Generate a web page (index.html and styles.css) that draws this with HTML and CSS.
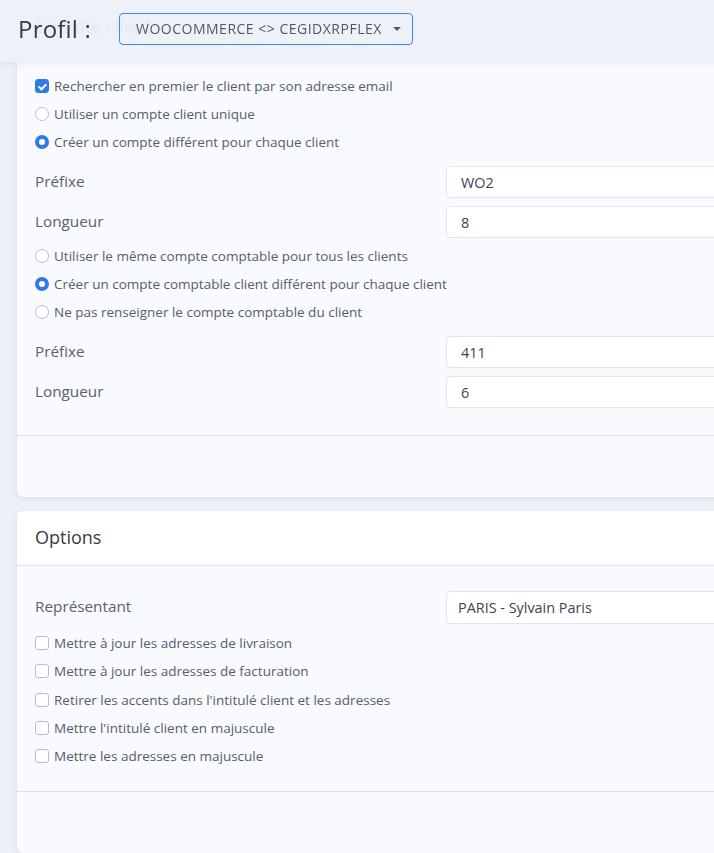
FILE: index.html
```html
<!DOCTYPE html>
<html lang="fr">
<head>
<meta charset="utf-8">
<title>Profil</title>
<link rel="stylesheet" href="styles.css">
</head>
<body>
<header class="topbar">
  <h1 class="topbar-title">Profil :</h1>
  <button class="profile-select" type="button">
    <span>WOOCOMMERCE &lt;&gt; CEGIDXRPFLEX</span>
    <span class="caret"></span>
  </button>
</header>

<main class="content">
  <section class="card">
    <div class="card-header"><h2>Compte client</h2></div>
    <div class="card-body card-body-client">
      <label class="check"><span class="box box-checked"></span>Rechercher en premier le client par son adresse email</label>
      <label class="check"><span class="radio"></span>Utiliser un compte client unique</label>
      <label class="check"><span class="radio radio-checked"></span>Créer un compte différent pour chaque client</label>

      <div class="fields">
        <div class="field"><span class="field-label">Préfixe</span><span class="input">WO2</span></div>
        <div class="field"><span class="field-label">Longueur</span><span class="input">8</span></div>
      </div>

      <label class="check"><span class="radio"></span>Utiliser le même compte comptable pour tous les clients</label>
      <label class="check"><span class="radio radio-checked"></span>Créer un compte comptable client différent pour chaque client</label>
      <label class="check"><span class="radio"></span>Ne pas renseigner le compte comptable du client</label>

      <div class="fields">
        <div class="field"><span class="field-label">Préfixe</span><span class="input">411</span></div>
        <div class="field"><span class="field-label">Longueur</span><span class="input">6</span></div>
      </div>
    </div>
    <div class="card-footer"></div>
  </section>

  <section class="card">
    <div class="card-header"><h2>Options</h2></div>
    <div class="card-body card-body-options">
      <div class="field field-tall"><span class="field-label">Représentant</span><span class="input">PARIS - Sylvain Paris</span></div>
      <div class="checks">
        <label class="check"><span class="box"></span>Mettre à jour les adresses de livraison</label>
        <label class="check"><span class="box"></span>Mettre à jour les adresses de facturation</label>
        <label class="check"><span class="box"></span>Retirer les accents dans l'intitulé client et les adresses</label>
        <label class="check"><span class="box"></span>Mettre l'intitulé client en majuscule</label>
        <label class="check"><span class="box"></span>Mettre les adresses en majuscule</label>
      </div>
    </div>
    <div class="card-footer"></div>
  </section>
</main>
</body>
</html>
```

FILE: styles.css
```css
* { box-sizing: border-box; }

html, body {
  margin: 0;
  padding: 0;
  overflow: hidden;
}

body {
  background: #edf1f7;
  font-family: "Open Sans", "Noto Sans", sans-serif;
  color: #5b6472;
  width: 714px;
  height: 853px;
}

/* sticky page bar, drawn over the scrolled content */
.topbar {
  position: fixed;
  top: 0;
  left: 0;
  right: 0;
  height: 62px;
  z-index: 10;
  display: flex;
  align-items: center;
  gap: 28px;
  padding: 0 0 5px 18px;
  background: rgba(237, 241, 248, 0.95);
  box-shadow: 0 2px 6px rgba(40, 60, 90, 0.08);
}

.topbar-title {
  margin: 0;
  font-size: 24px;
  font-weight: 500;
  color: #323b4b;
  letter-spacing: 0.2px;
}

.profile-select {
  display: flex;
  align-items: center;
  gap: 11px;
  height: 32px;
  width: 294px;
  padding: 0 14px 0 16px;
  border: 1px solid #3f86ee;
  border-radius: 4px;
  background: transparent;
  font-family: inherit;
  font-size: 14px;
  font-weight: 500;
  color: #4f5866;
  letter-spacing: 0.5px;
  white-space: nowrap;
}

.caret {
  width: 0;
  height: 0;
  border-left: 4px solid transparent;
  border-right: 4px solid transparent;
  border-top: 4px solid #4f5866;
}

.content {
  padding: 0 0 0 17px;
  display: flex;
  flex-direction: column;
  gap: 14px;
  width: 920px;
}

.card {
  background: #f8fafd;
  border-radius: 6px;
  box-shadow: 0 2px 6px rgba(40, 60, 90, 0.1);
  overflow: hidden;
}

.card-header {
  height: 55px;
  display: flex;
  align-items: center;
  padding: 0 18px;
  background: #ffffff;
  border-bottom: 1px solid #dde3ec;
}

.card-header h2 {
  margin: 0 0 3px;
  font-size: 18px;
  font-weight: 500;
  color: #343c4a;
}

.card-body {
  padding: 0 18px;
  border-bottom: 1px solid #dde3ec;
}

.card-body-client {
  padding-top: 17px;
  padding-bottom: 23px;
}

.card-body-options {
  padding-top: 25px;
  padding-bottom: 21px;
}

.card-footer {
  height: 61px;
}

/* checkbox / radio rows */
.check {
  display: flex;
  align-items: center;
  gap: 5px;
  height: 28px;
  font-size: 13.5px;
  color: #565e6b;
}

.checks .check { height: 28.25px; }

.box, .radio {
  flex: none;
  width: 14px;
  height: 14px;
  border: 1px solid #b8bfca;
  background: #ffffff;
  position: relative;
}

.box { border-radius: 3px; }
.radio { border-radius: 50%; }

.box-checked {
  background: #2f7ae5;
  border-color: #2f7ae5;
}

.box-checked::after {
  content: "";
  position: absolute;
  left: 4px;
  top: 1.5px;
  width: 3px;
  height: 6px;
  border: solid #ffffff;
  border-width: 0 2px 2px 0;
  transform: rotate(45deg);
}

.radio-checked {
  border: 4px solid #2f7ae5;
  background: #ffffff;
}

/* label + input rows */
.fields {
  display: flex;
  flex-direction: column;
  gap: 8px;
  margin: 10px 0 4px;
}

.field {
  display: grid;
  grid-template-columns: 411px 1fr;
  align-items: center;
}

.field-label {
  font-size: 15.3px;
  color: #59616f;
  margin-bottom: 3px;
}

.input {
  display: flex;
  align-items: center;
  height: 32px;
  padding: 0 14px;
  background: #ffffff;
  border: 1px solid #dfe5ee;
  border-radius: 4px;
  font-size: 14.4px;
  color: #3d4452;
}

.field-tall .input {
  height: 33px;
  padding: 0 11px;
}

.checks {
  margin-top: 5px;
}
```
